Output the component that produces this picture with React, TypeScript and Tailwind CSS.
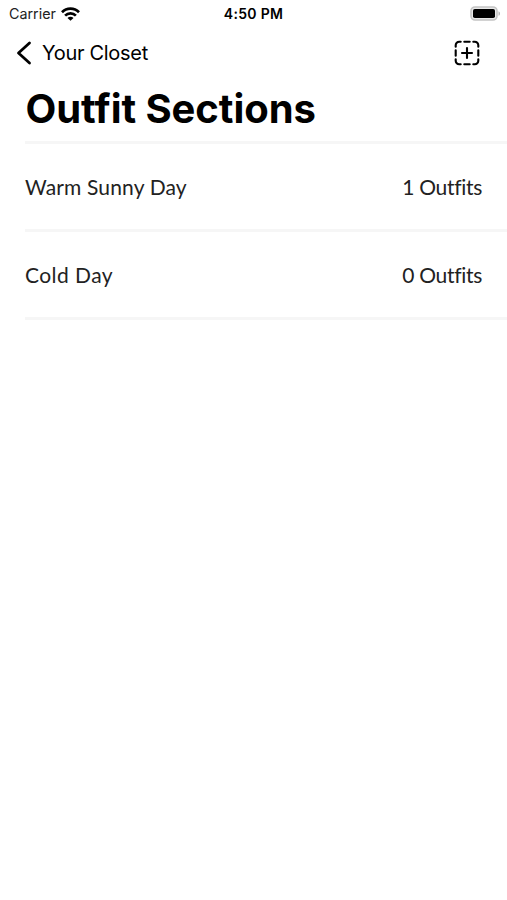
const sections = [
  { id: 1, name: 'Warm Sunny Day', count: 1, tracking: 'tracking-[0.15px]' },
  { id: 2, name: 'Cold Day', count: 0, tracking: 'tracking-[0.45px]' },
];

function WifiIcon() {
  return (
    <svg width="19" height="14" viewBox="0 0 19 14" fill="none" stroke="#000" strokeWidth="2.7">
      <path d="M1 5.2a12 12 0 0 1 17 0" />
      <path d="M4.1 8.6a7.6 7.6 0 0 1 10.8 0" />
      <path d="M9.5 13.8 6.5 10.9a4.2 4.2 0 0 1 6 0Z" fill="#000" stroke="none" />
    </svg>
  );
}

function BatteryIcon() {
  return (
    <svg width="31" height="15" viewBox="0 0 31 15">
      <rect x="1" y="1" width="26" height="13" rx="4" fill="#e8e8e8" stroke="#c4c4c4" strokeWidth="1.6" />
      <rect x="3" y="3" width="22" height="9" rx="1.8" fill="#000" />
      <path d="M28.5 5.2c2 .8 2 3.8 0 4.6Z" fill="#b5b5b5" />
    </svg>
  );
}

function AddSectionIcon() {
  return (
    <svg width="26" height="26" viewBox="0 0 26 26" fill="none" stroke="#000" strokeWidth="2.1" strokeLinecap="round">
      <path d="M1.7 6.7V5.2a3.5 3.5 0 0 1 3.5-3.5h1.5M19.3 1.7h1.5a3.5 3.5 0 0 1 3.5 3.5v1.5M24.3 19.3v1.5a3.5 3.5 0 0 1-3.5 3.5h-1.5M6.7 24.3H5.2a3.5 3.5 0 0 1-3.5-3.5v-1.5" />
      <path d="M10.3 1.7h5.4M10.3 24.3h5.4M1.7 10.3v5.4M24.3 10.3v5.4" />
      <path d="M13 8v10M8 13h10" />
    </svg>
  );
}

export default function App() {
  return (
    <main className="min-h-screen bg-white text-black font-['Inter',sans-serif]">
      <div className="grid grid-cols-3 items-center h-[27px] pl-[9px] pr-[6px]">
        <div className="flex items-center gap-[5px] text-[14.3px] text-[#222]">
          <span>Carrier</span>
          <WifiIcon />
        </div>
        <span className="text-center text-[14px] font-semibold tracking-[0.3px] whitespace-nowrap -ml-[3px]">
          4:50 PM
        </span>
        <div className="flex justify-end">
          <BatteryIcon />
        </div>
      </div>

      <nav className="flex items-center justify-between h-[51px] pl-[16px] pr-[27px]">
        <button className="flex items-center gap-[10px] text-[20px] tracking-[-0.3px]">
          <svg width="16" height="24" viewBox="0 0 16 24" fill="none" stroke="#000" strokeWidth="2.8" strokeLinecap="round" strokeLinejoin="round">
            <path d="M13.5 2 2.5 12l11 10" />
          </svg>
          <span>Your Closet</span>
        </button>
        <button aria-label="Add section">
          <AddSectionIcon />
        </button>
      </nav>

      <h1 className="h-[63px] pl-[25.5px] pt-[6px] text-[40px] leading-[50px] font-bold tracking-[-0.05px]">
        Outfit Sections
      </h1>

      <ul className="ml-[25px] border-t-[3px] border-[#f6f6f6] font-['Lato',sans-serif]">
        {sections.map((section) => (
          <li
            key={section.id}
            className="flex items-center justify-between h-[88px] pr-[25px] border-b-[3px] border-[#f6f6f6] text-[21px] text-[#222]"
          >
            <span className={section.tracking}>{section.name}</span>
            <span className="tracking-[-0.3px]">{section.count} Outfits</span>
          </li>
        ))}
      </ul>
    </main>
  );
}
